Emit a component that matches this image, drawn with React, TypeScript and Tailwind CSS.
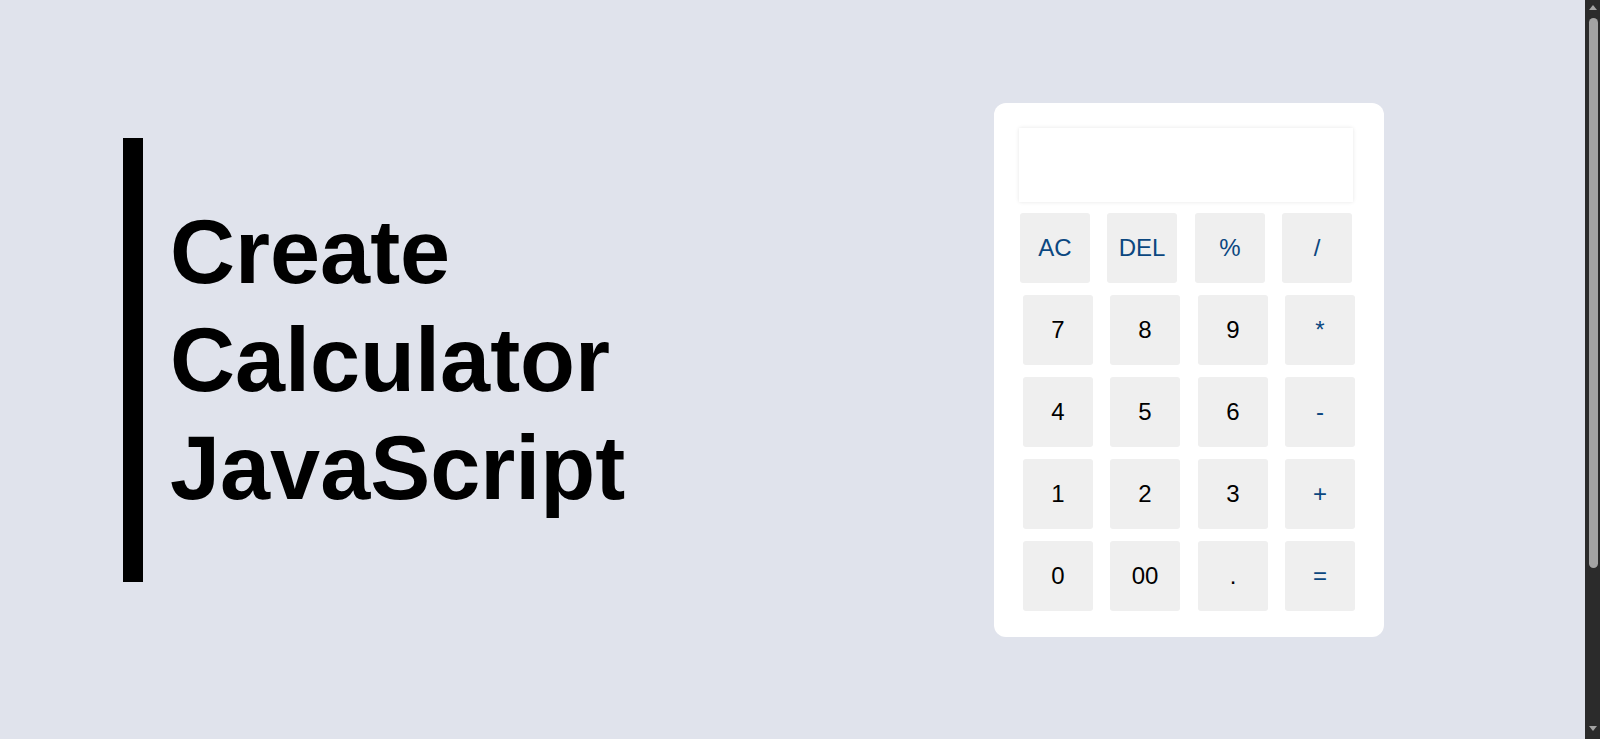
import React from "react";

const gapClasses = ["", "ml-[17px]", "ml-[18px]", "ml-[17px]"];

type Key = { label: string; op?: boolean };

const row1: Key[] = [
  { label: "AC", op: true },
  { label: "DEL", op: true },
  { label: "%", op: true },
  { label: "/", op: true },
];

const rows: Key[][] = [
  [{ label: "7" }, { label: "8" }, { label: "9" }, { label: "*", op: true }],
  [{ label: "4" }, { label: "5" }, { label: "6" }, { label: "-", op: true }],
  [{ label: "1" }, { label: "2" }, { label: "3" }, { label: "+", op: true }],
  [{ label: "0" }, { label: "00" }, { label: "." }, { label: "=", op: true }],
];

function Btn({ k, i }: { k: Key; i: number }) {
  return (
    <button
      className={`${gapClasses[i]} w-[70px] h-[70px] shrink-0 rounded-[3px] bg-[#efefef] flex items-center justify-center text-[24px] leading-none ${
        k.op ? "text-[#0b4780]" : "text-black"
      }`}
    >
      {k.label}
    </button>
  );
}

function Scrollbar() {
  return (
    <div className="w-[15px] h-[739px] shrink-0 bg-[#2b2b2b] flex flex-col items-center">
      <svg width="8" height="5" viewBox="0 0 8 5" className="mt-[5px] ml-[1px]">
        <polygon points="4,0 8,5 0,5" fill="#a3a3a3" />
      </svg>
      <div className="mt-[8px] ml-[1px] w-[9px] h-[550px] rounded-full bg-[#a3a3a3]"></div>
      <div className="flex-1"></div>
      <svg width="8" height="5" viewBox="0 0 8 5" className="mb-[8px] ml-[1px]">
        <polygon points="0,0 8,0 4,5" fill="#a3a3a3" />
      </svg>
    </div>
  );
}

export default function App() {
  return (
    <div className="h-[739px] w-full overflow-hidden flex bg-[#e0e3ec] font-['Liberation_Sans',Arial,sans-serif]">
      <div className="flex-1 h-[739px] flex items-center">
        <div className="ml-[123px] mb-[20px] border-l-[20px] border-black pl-[27px] py-[60px]">
          <h1 className="text-[90px] leading-[108px] font-bold text-black">
            Create
            <br />
            Calculator
            <br />
            JavaScript
          </h1>
        </div>
        <div className="ml-auto mr-[201px] w-[390px] bg-white rounded-[12px] px-[25px] pt-[25px] pb-[26px] flex flex-col">
          <div className="w-[334px] h-[74px] bg-white shadow-[0_0_4px_rgba(0,0,0,0.1)]"></div>
          <div className="mt-[11px] ml-[1px] flex">
            {row1.map((k, i) => (
              <Btn key={k.label} k={k} i={i} />
            ))}
          </div>
          {rows.map((r, ri) => (
            <div key={ri} className="mt-[12px] ml-[4px] flex">
              {r.map((k, i) => (
                <Btn key={k.label} k={k} i={i} />
              ))}
            </div>
          ))}
        </div>
      </div>
      <Scrollbar />
    </div>
  );
}
